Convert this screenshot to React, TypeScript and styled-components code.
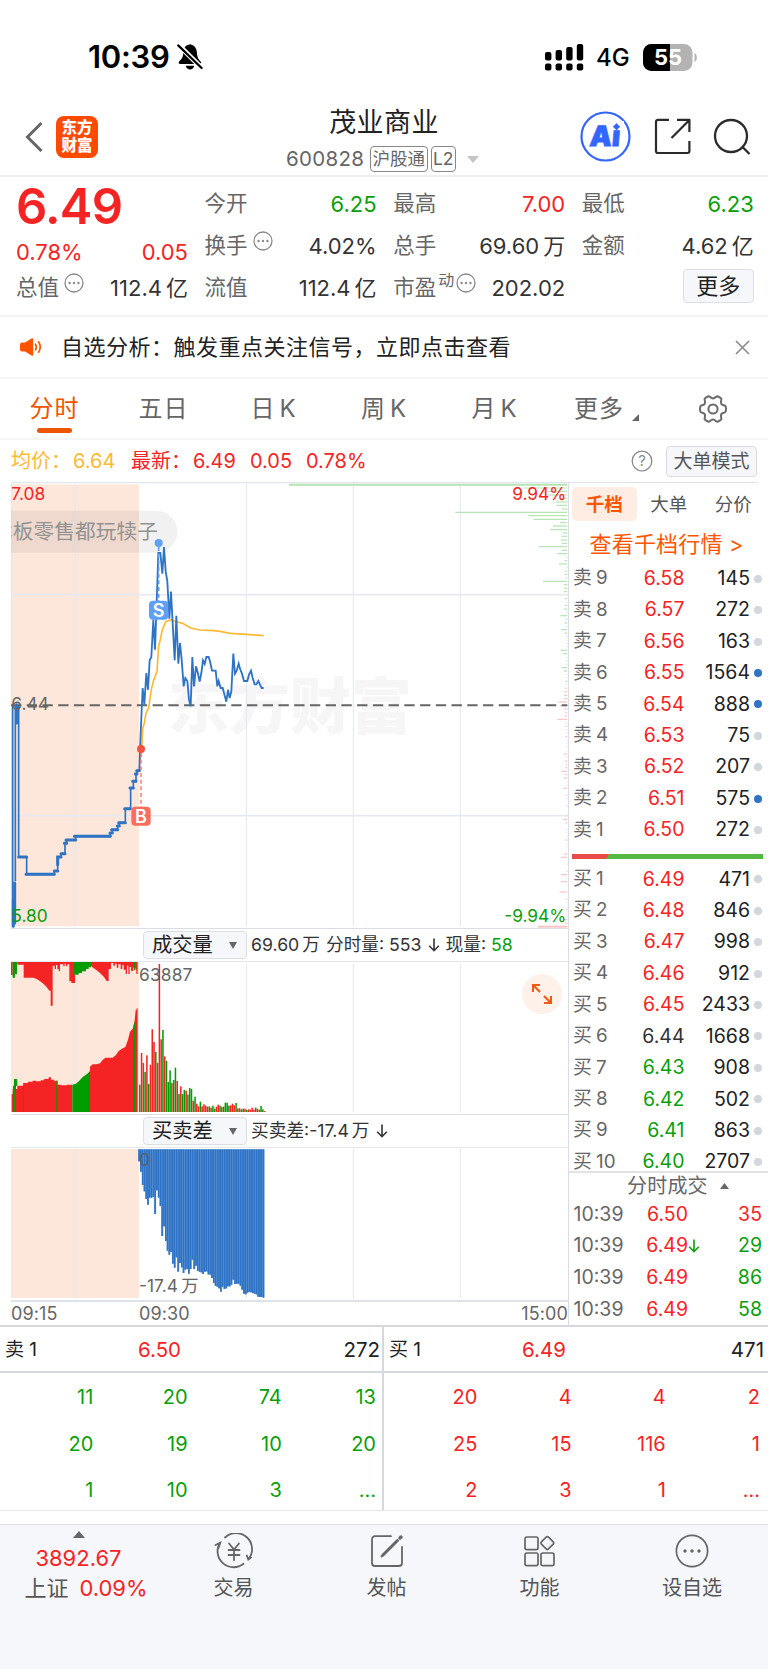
import React from 'react';
import styled, { createGlobalStyle } from 'styled-components';

const FONT = `Inter, "Noto Sans CJK SC", sans-serif`;
const RED = '#f42424';
const GREEN = '#0a9f0a';
const BLUE = '#2f74c4';
const ORANGE = '#ff5500';
const DARK = '#333333';
const GREY = '#666666';

const GlobalStyle = createGlobalStyle`
  * { box-sizing: border-box; }
  body { margin: 0; background: #fff; font-family: ${FONT}; line-height: 1.2; color: ${DARK}; }
  svg { display: block; flex: none; }
  svg text { font-family: ${FONT}; }
`;

const Page = styled.div`
  width: 768px;
  height: 1669px;
  display: flex;
  flex-direction: column;
  overflow: hidden;
  background: #fff;
  white-space: nowrap;
`;

/* ---------- status bar ---------- */
const StatusBar = styled.div`
  height: 94px;
  padding: 20px 70px 0 88px;
  display: flex;
  align-items: center;
  color: #000;
  flex: none;
`;
const Clock = styled.span`
  font-size: 31px;
  font-weight: 600;
  letter-spacing: -0.3px;
  width: 89px;
`;
const Network = styled.span`
  font-size: 24px;
  font-weight: 500;
  margin: 2px 13px 0 12px;
  width: 34px;
`;
const Push = styled.div`
  flex: 1;
`;

/* ---------- title bar ---------- */
const TitleBar = styled.div`
  height: 83px;
  flex: none;
  display: grid;
  grid-template-columns: 230px 308px 230px;
  border-bottom: 2px solid #efeff1;
`;
const TitleLeft = styled.div`
  display: flex;
  align-items: center;
  padding: 4px 0 0 25px;
  gap: 13px;
`;
const Logo = styled.div`
  width: 42px;
  height: 42px;
  border-radius: 8px;
  background: #ff4a00;
  color: #fff;
  font: 900 15.5px/17.5px ${FONT};
  display: flex;
  flex-direction: column;
  align-items: center;
  justify-content: center;
`;
const TitleMid = styled.div`
  display: flex;
  flex-direction: column;
  align-items: center;
`;
const StockName = styled.div`
  font-size: 27px;
  line-height: 34px;
  margin-top: 12px;
  letter-spacing: 0.4px;
  color: #222;
`;
const StockCode = styled.div`
  display: flex;
  align-items: center;
  height: 28px;
  width: 196px;
  margin-top: 5px;
  font-size: 20.5px;
  color: ${GREY};
`;
const CodeText = styled.span`
  width: 84px;
  letter-spacing: 0.3px;
`;
const Tag = styled.span<{ $w: number }>`
  width: ${(p) => p.$w}px;
  font-size: 17.5px;
  line-height: 23px;
  height: 26px;
  border: 1.5px solid #888;
  border-radius: 4px;
  display: flex;
  justify-content: center;
  margin-right: 3.5px;
`;
const CodeCaret = styled.span`
  margin-left: 8px;
`;
const TitleRight = styled.div`
  display: flex;
  align-items: center;
  padding: 4px 17px 0 42px;
  justify-content: space-between;
`;

/* ---------- quote ---------- */
const Quote = styled.div`
  height: 140px;
  flex: none;
  display: grid;
  grid-template-columns: repeat(4, 172px);
  column-gap: 16.6px;
  padding: 6px 0 0 16px;
  border-bottom: 2px solid #f5f5f6;
`;
const QuoteCol = styled.div`
  display: flex;
  flex-direction: column;
`;
const BigPrice = styled.div`
  height: 48px;
  line-height: 48px;
  font-size: 49px;
  font-weight: 600;
  letter-spacing: -0.8px;
  color: ${RED};
`;
const QuoteRow = styled.div<{ $h?: number }>`
  height: ${(p) => p.$h ?? 42}px;
  display: flex;
  align-items: center;
  justify-content: space-between;
  font-size: 22px;
`;
const Label = styled.span`
  color: ${GREY};
  font-size: 21.5px;
  display: flex;
  align-items: center;
  gap: 5px;
`;
const Value = styled.span<{ $c?: string }>`
  color: ${(p) => p.$c ?? DARK};
`;
const Unit = styled.span<{ $gap?: number }>`
  margin-left: ${(p) => p.$gap ?? 4}px;
`;
const Sup = styled.span`
  font-size: 16px;
  margin: -14px -3px 0 -3px;
`;
const Raise = styled.span`
  margin-top: -9px;
`;
const MoreButton = styled.button`
  width: 71px;
  height: 34px;
  padding: 0;
  margin: -4px 0 0;
  border: 1px solid #dcdfe6;
  border-radius: 4px;
  background: #f6f7fa;
  color: #222;
  font: 400 22px/32px ${FONT};
`;

/* ---------- notice ---------- */
const Notice = styled.div`
  height: 62px;
  flex: none;
  display: flex;
  align-items: center;
  padding: 0 18px 0 20px;
  font-size: 22px;
  letter-spacing: 0.5px;
  color: #222;
  border-bottom: 2px solid #f5f5f6;
`;
const NoticeText = styled.span`
  margin: 0 auto 0 19px;
`;

/* ---------- tabs ---------- */
const Tabs = styled.div`
  height: 61px;
  flex: none;
  display: grid;
  grid-template-columns: 109px 109px 111px 110px 111px 108px 110px;
  border-bottom: 2px solid #f5f5f6;
`;
const Tab = styled.div<{ $on?: boolean }>`
  display: flex;
  flex-direction: column;
  align-items: center;
  justify-content: flex-end;
  font-size: 24px;
  line-height: 34px;
  letter-spacing: 1px;
  padding-bottom: ${(p) => (p.$on ? 5 : 12)}px;
  color: ${(p) => (p.$on ? '#ee5500' : GREY)};
`;
const TabMark = styled.div`
  width: 35px;
  height: 5px;
  border-radius: 3px;
  background: #ee5500;
  margin-top: 2px;
`;
const TabMore = styled.div`
  display: flex;
  align-items: flex-end;
  gap: 8px;
  padding-left: 24px;
`;
const TabCorner = styled.span`
  padding-bottom: 17px;
`;
const GearCell = styled.div`
  display: flex;
  align-items: center;
  justify-content: center;
`;

/* ---------- averages ---------- */
const InfoRow = styled.div`
  height: 42px;
  flex: none;
  display: flex;
  align-items: center;
  padding: 0 11px;
  font-size: 20px;
  color: ${RED};
`;
const Info = styled.span<{ $c?: string; $w: number }>`
  color: ${(p) => p.$c ?? RED};
  width: ${(p) => p.$w}px;
`;
const ModeButton = styled.button`
  width: 91px;
  height: 31px;
  margin: 0 0 0 13.5px;
  padding: 0;
  border: 1px solid #d9dce3;
  border-radius: 4px;
  background: #f6f7fa;
  color: #555;
  font: 400 19px/29px ${FONT};
`;

/* ---------- market body ---------- */
const Body = styled.div`
  height: 845px;
  flex: none;
  margin: 0 0 0 11px;
  display: flex;
`;
const Charts = styled.div`
  width: 557px;
  display: flex;
  flex-direction: column;
`;
const IndicatorRow = styled.div`
  height: 34px;
  flex: none;
  display: flex;
  align-items: center;
  padding-left: 132px;
  border-top: 1px solid #dadde4;
  border-bottom: 1px solid #e4e6ec;
  font-size: 17.7px;
  color: ${DARK};
`;
const IndicatorText = styled.div`
  display: flex;
  align-items: center;
  gap: 6px;
`;
const Select = styled.div`
  width: 104px;
  height: 28px;
  margin-right: 4px;
  border: 1px solid #dcdfe6;
  border-radius: 4px;
  background: #f6f7fa;
  font-size: 20.3px;
  line-height: 26px;
  padding: 0 9px 0 8px;
  display: flex;
  justify-content: space-between;
  align-items: center;
  color: #222;
`;
const ChartBox = styled.div`
  position: relative;
  height: 152px;
  flex: none;
`;
const Expand = styled.div`
  position: absolute;
  right: 6px;
  top: 12px;
  width: 40px;
  height: 40px;
  border-radius: 50%;
  background: #fef1ea;
  display: flex;
  align-items: center;
  justify-content: center;
`;
const TimeAxis = styled.div`
  height: 26px;
  border-top: 2px solid #dfe2e8;
  display: flex;
  align-items: center;
  font-size: 18px;
  color: ${GREY};
`;
const AxisLabel = styled.span<{ $w?: number }>`
  width: ${(p) => (p.$w ? `${p.$w}px` : 'auto')};
  letter-spacing: 0.1px;
`;

/* ---------- order book ---------- */
const Book = styled.div`
  width: 200px;
  border-left: 1px solid #dadde4;
  display: flex;
  flex-direction: column;
`;
const BookTabs = styled.div`
  display: flex;
  height: 39px;
  width: 189px;
  padding: 4px 0 0 3px;
  border-top: 1px solid #dfe2e8;
  flex: none;
`;
const BookTab = styled.div<{ $on?: boolean }>`
  width: 64.5px;
  flex: none;
  height: 34px;
  border-radius: 5px;
  font-size: 18.5px;
  line-height: 34px;
  text-align: center;
  background: ${(p) => (p.$on ? '#ffece2' : 'transparent')};
  color: ${(p) => (p.$on ? ORANGE : '#555')};
  font-weight: ${(p) => (p.$on ? 700 : 400)};
`;
const BookLink = styled.div`
  height: 42px;
  flex: none;
  font-size: 22px;
  line-height: 46px;
  letter-spacing: 0.2px;
  padding-left: 20.5px;
  color: ${ORANGE};
`;
const Levels = styled.div`
  display: flex;
  flex-direction: column;
  overflow: hidden;
`;
const BuyLevels = styled(Levels)`
  height: 307px;
  flex: none;
`;
const LevelRow = styled.div`
  height: 31.42px;
  flex: none;
  display: grid;
  grid-template-columns: 46.5px 65px 65.5px 12px;
  align-items: center;
  padding-left: 4px;
  font-size: 19.5px;
`;
const LevelName = styled.span`
  color: ${GREY};
  font-size: 18.8px;
  word-spacing: -1px;
`;
const Num = styled.span<{ $c?: string }>`
  color: ${(p) => p.$c ?? '#222'};
  text-align: right;
`;
const Dot = styled.i<{ $on?: boolean }>`
  width: 8px;
  height: 8px;
  border-radius: 50%;
  margin-left: 4px;
  background: ${(p) => (p.$on ? BLUE : '#d3d6dd')};
`;
const Ratio = styled.div`
  height: 5px;
  width: 191px;
  margin: 8px 0 5px 3px;
  flex: none;
  background: linear-gradient(120deg, #e84a4a 0 32px, #55b843 32px);
`;
const TradesHead = styled.div`
  height: 28px;
  flex: none;
  border-top: 2px solid #e3e3e6;
  display: flex;
  align-items: center;
  padding: 0 0 0 58px;
  gap: 12px;
  font-size: 20px;
  letter-spacing: 0.2px;
  color: ${GREY};
`;
const TradeRow = styled.div`
  height: 31.6px;
  flex: none;
  display: grid;
  grid-template-columns: 60px 54.5px 16px 58px;
  align-items: center;
  padding-left: 4.5px;
  font-size: 19.5px;
`;
const TradeTime = styled.span`
  color: ${GREY};
`;

/* ---------- queue ---------- */
const Queues = styled.div`
  height: 186px;
  flex: none;
  display: flex;
  border-top: 2px solid #d5d8df;
  border-bottom: 1px solid #e6e7ea;
  margin-top: -2px;
`;
const Queue = styled.div<{ $line?: boolean }>`
  width: 384px;
  border-right: ${(p) => (p.$line ? '2px solid #d5d8df' : 'none')};
`;
const QueueHead = styled.div`
  height: 46px;
  display: grid;
  grid-template-columns: 133px 49px 197px;
  padding: 3px 0 0 5px;
  align-items: center;
  border-bottom: 2px solid #d5d8df;
  font-size: 20.5px;
  & > :last-child { padding-right: 4px; }
`;
const QueueName = styled.span`
  font-size: 19px;
  color: #222;
`;
const QueueGrid = styled.div<{ $c: string }>`
  display: grid;
  grid-template-columns: 93.4px repeat(3, 94.2px);
  grid-auto-rows: 46.6px;
  align-items: center;
  font-size: 20px;
  padding-top: 1px;
  color: ${(p) => p.$c};
  text-align: right;
`;

/* ---------- footer ---------- */
const Footer = styled.div`
  margin-top: 13px;
  flex: 1;
  background: #f6f7fa;
  border-top: 1px solid #dfe1e6;
  display: grid;
  grid-template-columns: 157px 153px 153px 153px 152px;
`;
const FootItem = styled.div`
  display: flex;
  flex-direction: column;
  align-items: center;
  padding-top: 8px;
  font-size: 20px;
  line-height: 28px;
  color: #555;
`;
const FootIndex = styled(FootItem)`
  padding-top: 6px;
`;
const FootLabel = styled.span`
  margin-top: 5px;
`;
const IndexValue = styled.span`
  font-size: 22px;
  line-height: 30px;
  margin-top: 5px;
  color: ${RED};
`;
const IndexRow = styled.span`
  font-size: 22px;
  line-height: 30px;
  padding-left: 15px;
  display: flex;
  gap: 11px;
`;

/* ---------- icons ---------- */
const Ellipsis = ({ size = 20 }: { size?: number }) => (
  <svg width={size} height={size} viewBox="0 0 20 20" fill="none" stroke="#8a8a8a" strokeWidth="1.3">
    <circle cx="10" cy="10" r="9" />
    <g fill="#8a8a8a" stroke="none">
      <circle cx="5.6" cy="10" r="1.2" />
      <circle cx="10" cy="10" r="1.2" />
      <circle cx="14.4" cy="10" r="1.2" />
    </g>
  </svg>
);

const Triangle = ({ w, h, up, color = GREY }: { w: number; h: number; up?: boolean; color?: string }) => (
  <svg width={w} height={h} viewBox="0 0 10 10" preserveAspectRatio="none">
    <path d={up ? 'M0 10L5 0L10 10Z' : 'M0 0L5 10L10 0Z'} fill={color} />
  </svg>
);

const DownArrow = ({ color = DARK }: { color?: string }) => (
  <svg width="12" height="14" viewBox="0 0 12 14" fill="none" stroke={color} strokeWidth="1.6">
    <path d="M6 0.5V12.5M1.2 7.8L6 12.7L10.8 7.8" />
  </svg>
);

const BellOff = () => (
  <svg width="26" height="28" viewBox="0 0 26 28">
    <path d="M13 1.2C8.4 2 6.5 5.3 6.3 9.5C6.1 14.5 4.6 16 2 18.6C1.3 20 1.8 21 3 21H22.8C24 21 24.4 20 23.8 18.8C21.3 16 20.2 14.3 19.9 9.5C19.6 5.2 17.4 2 13 1.2Z" />
    <path d="M8.8 22.8H17.2C16.7 25.4 15 26.4 13 26.4C11 26.4 9.3 25.4 8.8 22.8Z" />
    <path d="M0.5 1L25 25.2" stroke="#fff" strokeWidth="5" />
    <path d="M1.2 2.4L24.6 25" stroke="#000" strokeWidth="2.2" strokeLinecap="round" />
  </svg>
);

const Signal = () => (
  <svg width="39" height="27" viewBox="0 0 39 27">
    {[8, 6, 3, 0].map((y, i) => (
      <g key={i}>
        <rect x={i * 10.6} y={y} width="6.4" height={16.5 - y} rx="2" />
        <rect x={i * 10.6} y="19.6" width="6.4" height="6.8" rx="2" />
      </g>
    ))}
  </svg>
);

const Battery = () => (
  <svg width="55" height="27" viewBox="0 0 55 27">
    <defs>
      <clipPath id="cell"><rect width="49.5" height="27" rx="8.5" /></clipPath>
    </defs>
    <g clipPath="url(#cell)">
      <rect width="50" height="27" fill="#b3b3b3" />
      <rect width="27" height="27" fill="#000" />
    </g>
    <path d="M51.5 9V18C54.6 17 54.6 10 51.5 9Z" fill="#b3b3b3" />
    <text x="25" y="21.3" fontSize="22" fontWeight="700" textAnchor="middle" fill="#fff">55</text>
  </svg>
);

const BackIcon = () => (
  <svg width="18" height="30" viewBox="0 0 18 30" fill="none" stroke={GREY} strokeWidth="3">
    <path d="M16.5 1L2.5 15L16.5 29" />
  </svg>
);

const AiIcon = () => (
  <svg width="51" height="51" viewBox="0 0 51 51">
    <circle cx="25.5" cy="25.5" r="24" fill="none" stroke="#3366ff" strokeWidth="2.2" />
    <text x="9" y="35.5" fontSize="28" fontWeight="900" fill="#3366ff" stroke="#3366ff" strokeWidth="0.8" transform="skewX(-5) translate(3 0)">Ai</text>
    <rect x="30" y="10" width="14" height="9" fill="#fff" />
    <path d="M36.5 12L38.2 14L40.2 15.7L38.2 17.4L36.5 19.4L34.8 17.4L32.8 15.7L34.8 14Z" fill="#3366ff" />
  </svg>
);

const ShareIcon = () => (
  <svg width="37" height="37" viewBox="0 0 37 37" fill="none" stroke="#2b2b2b" strokeWidth="2.2" strokeLinejoin="round">
    <path d="M15 1.8H4A2 2 0 0 0 2 3.8V33A2 2 0 0 0 4 35H33.5A2 2 0 0 0 35.4 33V23" />
    <path d="M23 1.8H35.4V14M35.2 2.2L17.5 20" />
  </svg>
);

const SearchIcon = () => (
  <svg width="38" height="38" viewBox="0 0 38 38" fill="none" stroke="#2b2b2b" strokeWidth="2.3">
    <circle cx="18" cy="18" r="16" />
    <path d="M29 28.5L36.5 36" />
  </svg>
);

const Speaker = () => (
  <svg width="22" height="18" viewBox="0 0 22 18">
    <path d="M0 6.5Q0 4.6 2 4.6H5L11.5 0.4Q13.2-0.2 13.2 1.6V16.4Q13.2 18.2 11.5 17.6L5 13.4H2Q0 13.4 0 11.5Z" fill={ORANGE} />
    <path d="M15.2 5.6Q17.4 9 15.2 12.4M18.2 3.2Q22.4 9 18.2 14.8" fill="none" stroke={ORANGE} strokeWidth="1.7" />
  </svg>
);

const Gear = () => (
  <svg width="30" height="30" viewBox="0 0 30 30" fill="none" stroke="#6b6b6b" strokeWidth="2">
    <circle cx="15" cy="15" r="4.6" />
    <path strokeLinejoin="round" d="M10.5 2.2C12 2 12.5 4.4 15 4.4C17.5 4.4 18 2 19.5 2.2C21.500 3 22.600 3.800 23.300 4.600C23.800 6 22.300 7.600 23.200 9.800C24.300 11.600 26.800 11 27.600 12.300C28.300 14.200 28.300 15.800 27.600 17.700C26.800 19 24.300 18.400 23.200 20.200C22.300 22.400 23.800 24 23.300 25.400C22.600 26.200 21.500 27 19.500 27.800C18 28 17.500 25.600 15 25.600C12.500 25.600 12 28 10.500 27.800C8.500 27 7.400 26.200 6.700 25.400C6.200 24 7.700 22.400 6.800 20.200C5.700 18.400 3.200 19 2.400 17.700C1.700 15.800 1.700 14.200 2.400 12.300C3.200 11 5.700 11.600 6.800 9.800C7.700 7.600 6.200 6 6.700 4.600C7.400 3.800 8.500 3 10.500 2.200Z" />
  </svg>
);

const Help = () => (
  <svg width="22" height="22" viewBox="0 0 22 22">
    <circle cx="11" cy="11" r="9.8" fill="none" stroke="#8a8a8a" strokeWidth="1.3" />
    <text x="11" y="16.4" fontSize="15" textAnchor="middle" fill="#8a8a8a">?</text>
  </svg>
);

const TradeIcon = () => (
  <svg width="40" height="36" viewBox="0 0 40 36" fill="none" stroke="#666" strokeWidth="1.8" strokeLinecap="round">
    <path d="M11 4.5A16 16 0 0 1 34.6 26M37 24.5L34.3 26.5L32.8 22.5" />
    <path d="M29.5 30.8A16 16 0 0 1 5.3 11M1.5 12L6.3 9.7L4.5 15" />
    <path d="M15 10.5L20 16.5L25 10.5M14.5 17H25.5M14.5 22H25.5M20 17V27" />
  </svg>
);

const PostIcon = () => (
  <svg width="36" height="36" viewBox="0 0 36 36" fill="none" stroke="#666" strokeWidth="1.8" strokeLinecap="round">
    <path d="M22 3.2H6A3 3 0 0 0 3 6.2V30A3 3 0 0 0 6 33H30A3 3 0 0 0 33 30V14" />
    <path d="M14 22L28.5 7.5" strokeWidth="3" />
    <path d="M31 5L32 4" strokeWidth="3.4" />
    <path d="M12.5 23.5L14 22" />
  </svg>
);

const FunctionIcon = () => (
  <svg width="34" height="36" viewBox="0 0 34 36" fill="none" stroke="#666" strokeWidth="1.7">
    <rect x="2" y="4" width="13" height="12.6" rx="1.8" />
    <rect x="2" y="20" width="13" height="12.6" rx="1.8" />
    <rect x="18" y="20" width="13" height="12.6" rx="1.8" />
    <rect x="19.3" y="5" width="10" height="10" rx="1.6" transform="rotate(45 24.3 10)" />
  </svg>
);

const AddIcon = () => (
  <svg width="36" height="36" viewBox="0 0 36 36" fill="none" stroke="#666" strokeWidth="1.7">
    <circle cx="18" cy="18" r="15.6" />
    <g fill="#666" stroke="none">
      <circle cx="11" cy="18" r="1.7" />
      <circle cx="18" cy="18" r="1.7" />
      <circle cx="25" cy="18" r="1.7" />
    </g>
  </svg>
);

/* ---------- charts ---------- */
const PRE_OPEN = 'M38 1370V708M44 1360V1290M46 1235V708M50 708V760M56 708V1162H80V1214H163V1204H173V1162H183V1152H195V1121H200V1111H227V1100H331V1090H337V1080H353V1069H358V1059H376V1017H392V955H400V935H408V913H411V903H418';
const PRE_THICK = 'M50 705V760M56 1162H80M78 1214H163M163 1204H173M173 1185V1162H183M183 1152H195M193 1121H200M198 1111H227M223 1100H331M330 1090H337M335 1080H353M352 1069H358M356 1059H376M374 1017H390M390 955H400M398 935H408M406 913H411M410 903H418M40 1370V1290M44 1360V1240';
const PRICE = '418,903 420,840 424,745 428,655 433,705 439,610 444,660 449,572 454,562 460,450 465,540 470,400 475,250 481,250 487,312 492,232 497,305 502,335 508,447 513,366 518,460 524,572 529,438 535,582 540,520 545,570 551,650 556,625 562,634 567,690 572,710 577,562 582,650 588,590 593,608 599,636 604,610 609,572 614,583 619,562 626,562 630,575 636,603 647,603 652,650 656,634 662,655 668,655 679,696 684,660 689,685 694,665 700,552 705,612 710,603 716,582 721,600 726,612 732,634 742,634 747,615 753,603 758,625 764,644 769,644 775,634 780,645 785,655 791,655';
const AVERAGE = '421,870 426,825 428,778 433,760 438,730 446,715 454,660 460,635 471,605 476,528 481,510 487,480 497,456 513,450 524,455 548,461 572,475 600,481 640,483 665,486 690,491 740,494 791,498';

const SELL_DEPTH: [number, number][] = [
  [55, 130], [65, 60], [76, 60], [86, 20], [97, 34], [107, 33], [118, 16], [128, 336], [138, 117], [149, 101], [159, 22], [169, 43], [180, 51],
  [190, 14], [200, 17], [211, 19], [221, 16], [231, 86], [242, 16], [252, 30], [262, 4], [273, 8], [283, 26], [293, 2], [304, 7], [314, 8],
  [325, 5], [335, 73], [345, 10], [356, 9], [366, 11], [376, 2], [387, 7], [397, 4], [407, 7], [418, 11], [428, 3], [438, 21], [449, 5],
  [460, 8], [470, 3], [480, 18], [490, 9], [500, 3], [511, 3], [522, 3], [532, 3], [542, 20], [552, 13], [563, 2], [573, 3], [584, 3],
  [594, 18], [604, 10], [615, 2], [625, 3], [635, 6], [646, 3],
];
const BUY_DEPTH: [number, number][] = [
  [656, 6], [666, 9], [677, 10], [687, 10], [697, 27], [708, 23], [718, 9], [729, 6], [739, 9], [749, 30], [760, 4], [770, 6], [780, 2],
  [790, 3], [801, 6], [812, 2], [822, 2], [832, 2], [843, 2], [853, 12], [863, 3], [874, 8], [884, 5], [894, 6], [905, 18], [915, 7],
  [925, 10], [936, 2], [946, 2], [956, 12], [977, 3], [987, 2], [1008, 3], [1039, 3], [1049, 12], [1060, 6], [1080, 2], [1090, 2],
  [1101, 2], [1111, 6], [1122, 2], [1132, 2], [1153, 10], [1163, 19], [1184, 2], [1205, 3], [1215, 19], [1225, 3], [1236, 19], [1246, 2],
  [1267, 23], [1288, 5], [1298, 2], [1319, 3], [1340, 3], [1350, 10], [1360, 9],
];

const Grid = ({ top, bottom }: { top: number; bottom: number }) => (
  <path d={[225, 739, 1060, 1381].map((x) => `M${x} ${top}V${bottom}`).join('')} stroke="#e3e7ef" strokeWidth="3" />
);

const PriceChart = () => (
  <svg width="557" height="446" viewBox="33 37 1671 1338">
    <rect x="33" y="44" width="384" height="1326" fill="#fde6da" />
    <text x="503" y="777" fontSize="183" fontWeight="900" fill="#f6f6f7">东方财富</text>
    <Grid top={42} bottom={1370} />
    <path d="M33 375H1704M417 1038H1704M33 1038H417" stroke="#e6e9f0" strokeWidth="5" />
    <path d="M33 39H1704" stroke="#e2e5eb" strokeWidth="4" />
    <path d="M34 40V1377" stroke="#e2e5eb" strokeWidth="3" />
    <g stroke="#b5e4b5" strokeWidth="3.6">
      <path d="M867 45H1702" strokeWidth="6" />
      {SELL_DEPTH.map(([y, w]) => <path key={y} d={`M${1702 - w} ${y}H1702`} />)}
    </g>
    <g stroke="#fcc4c4" strokeWidth="3.6">
      <path d="M1614 1371H1702" strokeWidth="6" />
      {BUY_DEPTH.map(([y, w]) => <path key={y} d={`M${1702 - w} ${y}H1702`} />)}
    </g>
    <path d="M33 123H469A62.5 62.5 0 0 1 469 249H33Z" fill="#000" fillOpacity="0.055" />
    <text x="474" y="209" fontSize="62" textAnchor="end" letterSpacing="0.3" fill="#929292">本板零售都玩犊子</text>
    <path d="M33 707H1702" stroke="#666" strokeWidth="6" strokeDasharray="31 16.2" />
    <g fill="none" strokeLinejoin="miter">
      <polyline points={AVERAGE} stroke="#fdb933" strokeWidth="5" />
      <path d={PRE_OPEN} stroke={BLUE} strokeWidth="5" />
      <path d={PRE_THICK} stroke={BLUE} strokeWidth="9" strokeLinecap="round" />
      <polyline points={PRICE} stroke={BLUE} strokeWidth="5.5" />
    </g>
    <path d="M476 232V394" stroke="#5f9ff8" strokeWidth="5" strokeDasharray="12 8" />
    <circle cx="476" cy="220" r="12" fill="#5f9ff8" />
    <rect x="447" y="393" width="58" height="57" rx="12" fill="#5f9ff8" />
    <text x="476" y="441" fontSize="54" fontWeight="600" textAnchor="middle" fill="#fff">S</text>
    <path d="M423 850V1012" stroke="#fa6b5c" strokeWidth="4" strokeDasharray="12 8" />
    <circle cx="423" cy="838" r="12" fill="#f2533f" />
    <rect x="394" y="1011" width="58" height="57" rx="12" fill="#fb6d5e" />
    <text x="423" y="1059" fontSize="54" fontWeight="600" textAnchor="middle" fill="#fff">B</text>
    <g fontSize="52">
      <text x="34" y="90" fill={RED}>7.08</text>
      <text x="34" y="722" fill={GREY}>6.44</text>
      <text x="34" y="1356" fill={GREEN}>5.80</text>
      <text x="1699" y="90" textAnchor="end" fill={RED}>9.94%</text>
      <text x="1699" y="1356" textAnchor="end" fill={GREEN}>-9.94%</text>
    </g>
  </svg>
);

const VOLUMES = (
  'g497 r402 r432 g459 r409 g495 r437 r331 r369 g399 r432 r135 r361 g333 r412 g426 g489 g454 r492 g483 g446 r486 g525 r502 g525 g513 r515 g527 g507 g510 ' +
  'r545 g533 r554 r562 g548 r562 r556 r560 r563 g562 r566 g560 g569 r563 r557 g560 r564 g563 g551 g551 g560 r559 r554 r559 g552 r568 r568 g571 g569 r569 ' +
  'g573 r571 r572 r566 r572 g566 r569 r572 g561 g571 r576'
).split(' ').map((s) => ({ up: s[0] === 'r', top: Number(s.slice(1)) }));

const VolumeChart = () => (
  <svg width="557" height="151" viewBox="33 129 1671 453">
    <rect x="33" y="129" width="384" height="451" fill="#fde6da" />
    <Grid top={135} bottom={580} />
    <g fill="#f42424">
      <path d="M33 129V168H38V129ZM52 129V137H71V176H100L110 180L125 190L138 202L148 215H152V260H158V140H164V150H168V138H172V150H176V156H180V136H190V142H194V134H198V142H202V136H208V187H214V192H225V129H273V142L288 152L300 162L312 174L320 186H326V150H333V132H340V140H345V134H350V146H355V136H362V150H367V138H371V152H377V165H381V140H385V165H389V144H393V156H399V146H406V152H409V165H413V129Z" />
      <path d="M35 579V525H38V510H52V500H70V492H84V488H98V485H108V487H122V484H132V480H146V475H153V482H162V485H173V497H183V499H200V497H217V579ZM270 579V443L278 436H290L300 433L308 423L316 416H338L348 408L356 396L366 389L376 384L384 362L390 338L398 329L404 305L407 272H410V268H413V579Z" />
    </g>
    <g fill="#009c00">
      <path d="M38 129V176H45V166H51V129ZM222 129V167H236V162H246V157H258V150H266V145H273V129ZM401 129V154H405V129Z" />
      <path d="M39 579V500H42V480H51V485H52V500H48V579ZM217 579V497L228 494L238 485L248 474L262 464L270 456V579ZM401 579V320L405 305V579ZM70 579V492H72V579ZM169 579V485H172V579Z" />
    </g>
    {VOLUMES.map((v, i) => (
      <rect key={i} x={417 + i * 5.35} y={v.top} width="4.6" height={579 - v.top} fill={v.up ? '#f42424' : '#009c00'} />
    ))}
    <text x="417" y="185" fontSize="52" fill={GREY} letterSpacing="0.5">63887</text>
  </svg>
);

const DIFFS = [
  727, 758, 798, 817, 840, 857, 836, 836, 834, 885, 814, 836, 861, 951, 922, 966, 995, 1007, 999, 1034, 1046, 1015, 1058, 1032, 1045, 1062,
  1052, 1050, 1064, 1050, 1022, 1050, 1040, 1055, 1058, 1060, 1065, 1058, 1057, 1066, 1067, 1077, 1092, 1100, 1103, 1108, 1118, 1103, 1110,
  1108, 1102, 1102, 1097, 1082, 1095, 1094, 1094, 1100, 1112, 1124, 1126, 1121, 1119, 1120, 1122, 1124, 1126, 1133, 1134, 1134, 1136,
];

const DiffChart = () => (
  <svg width="557" height="151" viewBox="33 687 1671 453">
    <rect x="33" y="690" width="384" height="447" fill="#fde6da" />
    <Grid top={690} bottom={1137} />
    {DIFFS.map((b, i) => (
      <g key={i}>
        <rect x={415 + i * 5.33} y="691" width="5.4" height={b - 691} fill="#4a87ce" />
        <rect x={415 + i * 5.33} y="691" width="4" height={b - 691} fill="#2d72c5" />
      </g>
    ))}
    <text x="417" y="741" fontSize="52" fill="#55606e">0</text>
    <text x="417" y="1119" fontSize="52" fill={GREY}>-17.4<tspan dx="10">万</tspan></text>
  </svg>
);

/* ---------- data ---------- */
const SELLS: [number, string, string, boolean?][] = [
  [9, '6.58', '145'], [8, '6.57', '272'], [7, '6.56', '163'], [6, '6.55', '1564', true], [5, '6.54', '888', true],
  [4, '6.53', '75'], [3, '6.52', '207'], [2, '6.51', '575', true], [1, '6.50', '272'],
];
const BUYS: [number, string, string, string][] = [
  [1, '6.49', '471', RED], [2, '6.48', '846', RED], [3, '6.47', '998', RED], [4, '6.46', '912', RED], [5, '6.45', '2433', RED],
  [6, '6.44', '1668', DARK], [7, '6.43', '908', GREEN], [8, '6.42', '502', GREEN], [9, '6.41', '863', GREEN], [10, '6.40', '2707', GREEN],
];
const TRADES: [string, string, string, boolean?][] = [
  ['6.50', '35', RED], ['6.49', '29', GREEN, true], ['6.49', '86', GREEN], ['6.49', '58', GREEN],
];
const SELL_QUEUE = ['11', '20', '74', '13', '20', '19', '10', '20', '1', '10', '3', '...'];
const BUY_QUEUE = ['20', '4', '4', '2', '25', '15', '116', '1', '2', '3', '1', '...'];

export default function App() {
  return (
    <Page>
      <GlobalStyle />
      <StatusBar>
        <Clock>10:39</Clock>
        <BellOff />
        <Push />
        <Signal />
        <Network>4G</Network>
        <Battery />
      </StatusBar>

      <TitleBar>
        <TitleLeft>
          <BackIcon />
          <Logo><span>东方</span><span>财富</span></Logo>
        </TitleLeft>
        <TitleMid>
          <StockName>茂业商业</StockName>
          <StockCode>
            <CodeText>600828</CodeText>
            <Tag $w={57.5}>沪股通</Tag>
            <Tag $w={24.5}>L2</Tag>
            <CodeCaret><Triangle w={12} h={7} color="#c4c4c4" /></CodeCaret>
          </StockCode>
        </TitleMid>
        <TitleRight>
          <AiIcon />
          <ShareIcon />
          <SearchIcon />
        </TitleRight>
      </TitleBar>

      <Quote>
        <QuoteCol>
          <BigPrice>6.49</BigPrice>
          <QuoteRow><Value $c={RED}>0.78%</Value><Value $c={RED}>0.05</Value></QuoteRow>
          <QuoteRow $h={30}><Label>总值<Raise><Ellipsis /></Raise></Label><Value>112.4<Unit>亿</Unit></Value></QuoteRow>
        </QuoteCol>
        <QuoteCol>
          <QuoteRow><Label>今开</Label><Value $c={GREEN}>6.25</Value></QuoteRow>
          <QuoteRow><Label>换手<Raise><Ellipsis /></Raise></Label><Value>4.02%</Value></QuoteRow>
          <QuoteRow><Label>流值</Label><Value>112.4<Unit>亿</Unit></Value></QuoteRow>
        </QuoteCol>
        <QuoteCol>
          <QuoteRow><Label>最高</Label><Value $c={RED}>7.00</Value></QuoteRow>
          <QuoteRow><Label>总手</Label><Value>69.60<Unit>万</Unit></Value></QuoteRow>
          <QuoteRow><Label>市盈<Sup>动</Sup><Raise><Ellipsis /></Raise></Label><Value>202.02</Value></QuoteRow>
        </QuoteCol>
        <QuoteCol>
          <QuoteRow><Label>最低</Label><Value $c={GREEN}>6.23</Value></QuoteRow>
          <QuoteRow><Label>金额</Label><Value>4.62<Unit>亿</Unit></Value></QuoteRow>
          <QuoteRow><Push /><MoreButton>更多</MoreButton></QuoteRow>
        </QuoteCol>
      </Quote>

      <Notice>
        <Speaker />
        <NoticeText>自选分析：触发重点关注信号，立即点击查看</NoticeText>
        <svg width="15" height="15" viewBox="0 0 15 15" stroke="#8a8a8a" strokeWidth="1.6">
          <path d="M1 1L14 14M14 1L1 14" />
        </svg>
      </Notice>

      <Tabs>
        <Tab $on>分时<TabMark /></Tab>
        <Tab>五日</Tab>
        <Tab><span>日<Unit>K</Unit></span></Tab>
        <Tab><span>周<Unit>K</Unit></span></Tab>
        <Tab><span>月<Unit>K</Unit></span></Tab>
        <TabMore>
          <Tab>更多</Tab>
          <TabCorner><svg width="7" height="7" viewBox="0 0 7 7"><path d="M7 0V7H0Z" fill={GREY} /></svg></TabCorner>
        </TabMore>
        <GearCell><Gear /></GearCell>
      </Tabs>

      <InfoRow>
        <Info $c="#fdb933" $w={62}>均价：</Info>
        <Info $c="#fdb933" $w={58}>6.64</Info>
        <Info $w={62}>最新：</Info>
        <Info $w={57}>6.49</Info>
        <Info $w={56}>0.05</Info>
        <Info $w={60}>0.78%</Info>
        <Push />
        <Help />
        <ModeButton>大单模式</ModeButton>
      </InfoRow>

      <Body>
        <Charts>
          <PriceChart />
          <IndicatorRow>
            <Select>成交量<Triangle w={8} h={7} /></Select>
            <IndicatorText><span>69.60<Unit $gap={3}>万</Unit></span><span>分时量: 553</span><DownArrow /><span>现量: <Value $c={GREEN}>58</Value></span></IndicatorText>
          </IndicatorRow>
          <ChartBox>
            <VolumeChart />
            <Expand>
              <svg width="20" height="20" viewBox="0 0 20 20" fill="none" stroke="#f05a10" strokeWidth="2">
                <path d="M1 8V1H8M1 1L8 8M19 12V19H12M19 19L12 12" />
              </svg>
            </Expand>
          </ChartBox>
          <IndicatorRow>
            <Select>买卖差<Triangle w={8} h={7} /></Select>
            <IndicatorText><span>买卖差:-17.4<Unit $gap={3}>万</Unit></span><DownArrow /></IndicatorText>
          </IndicatorRow>
          <ChartBox><DiffChart /></ChartBox>
          <TimeAxis>
            <AxisLabel $w={128}>09:15</AxisLabel>
            <AxisLabel>09:30</AxisLabel>
            <Push />
            <AxisLabel>15:00</AxisLabel>
          </TimeAxis>
        </Charts>

        <Book>
          <BookTabs>
            <BookTab $on>千档</BookTab>
            <BookTab>大单</BookTab>
            <BookTab>分价</BookTab>
          </BookTabs>
          <BookLink>查看千档行情 &gt;</BookLink>
          <Levels>
            {SELLS.map(([n, price, qty, on]) => (
              <LevelRow key={n}>
                <LevelName>卖 {n}</LevelName>
                <Num $c={RED}>{price}</Num>
                <Num>{qty}</Num>
                <Dot $on={on} />
              </LevelRow>
            ))}
          </Levels>
          <Ratio />
          <BuyLevels>
            {BUYS.map(([n, price, qty, color]) => (
              <LevelRow key={n}>
                <LevelName>买 {n}</LevelName>
                <Num $c={color}>{price}</Num>
                <Num>{qty}</Num>
                <Dot />
              </LevelRow>
            ))}
          </BuyLevels>
          <TradesHead>分时成交<Triangle w={9} h={6} up /></TradesHead>
          {TRADES.map(([price, qty, color, down], i) => (
            <TradeRow key={i}>
              <TradeTime>10:39</TradeTime>
              <Num $c={RED}>{price}</Num>
              <span>{down && <DownArrow color={GREEN} />}</span>
              <Num $c={color}>{qty}</Num>
            </TradeRow>
          ))}
        </Book>
      </Body>

      <Queues>
        <Queue $line>
          <QueueHead><QueueName>卖 1</QueueName><Value $c={RED}>6.50</Value><Num>272</Num></QueueHead>
          <QueueGrid $c={GREEN}>{SELL_QUEUE.map((q, i) => <span key={i}>{q}</span>)}</QueueGrid>
        </Queue>
        <Queue>
          <QueueHead><QueueName>买 1</QueueName><Value $c={RED}>6.49</Value><Num>471</Num></QueueHead>
          <QueueGrid $c={RED}>{BUY_QUEUE.map((q, i) => <span key={i}>{q}</span>)}</QueueGrid>
        </Queue>
      </Queues>

      <Footer>
        <FootIndex>
          <Triangle w={12} h={7} up />
          <IndexValue>3892.67</IndexValue>
          <IndexRow>上证<Value $c={RED}>0.09%</Value></IndexRow>
        </FootIndex>
        <FootItem><TradeIcon /><FootLabel>交易</FootLabel></FootItem>
        <FootItem><PostIcon /><FootLabel>发帖</FootLabel></FootItem>
        <FootItem><FunctionIcon /><FootLabel>功能</FootLabel></FootItem>
        <FootItem><AddIcon /><FootLabel>设自选</FootLabel></FootItem>
      </Footer>
    </Page>
  );
}
